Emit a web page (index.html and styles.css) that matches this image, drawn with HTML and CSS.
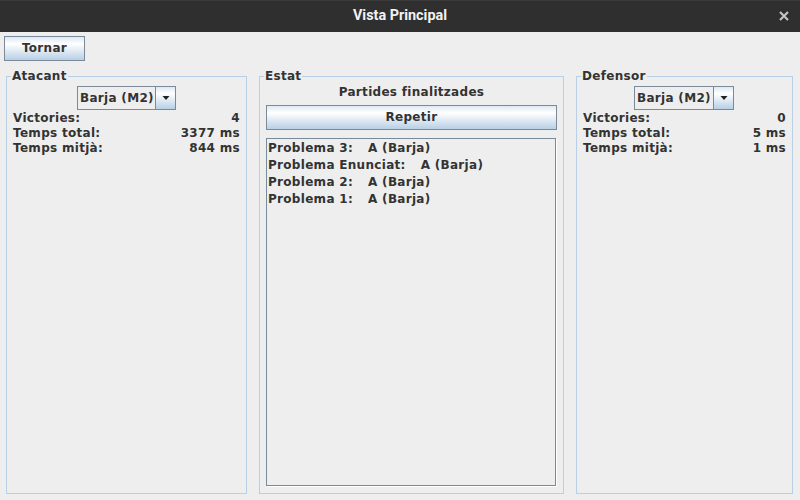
FILE: index.html
```html
<!DOCTYPE html>
<html lang="ca">
<head>
<meta charset="utf-8">
<title>Vista Principal</title>
<link rel="stylesheet" href="styles.css">
</head>
<body>
<div class="window">
  <header class="titlebar">
    <span></span>
    <span class="title">Vista Principal</span>
    <span class="close-wrap">
      <svg class="close" width="10" height="10" viewBox="0 0 10 10"><path d="M1 1 L9 9 M9 1 L1 9" stroke="#c4c4c4" stroke-width="2.2" fill="none"/></svg>
    </span>
  </header>
  <div class="toolbar">
    <button class="btn tornar">Tornar</button>
  </div>
  <main class="panels">
    <fieldset class="panel atacant">
      <legend>Atacant</legend>
      <div class="combo">
        <span class="combo-text">Barja (M2)</span>
        <span class="combo-btn"><svg width="8" height="5" viewBox="0 0 8 5"><path d="M0.5 0 L7.5 0 L4 4 Z" fill="#222"/></svg></span>
      </div>
      <div class="stats">
        <div class="row"><span>Victories:</span><span>4</span></div>
        <div class="row"><span>Temps total:</span><span>3377 ms</span></div>
        <div class="row"><span>Temps mitjà:</span><span>844 ms</span></div>
      </div>
    </fieldset>
    <fieldset class="panel estat">
      <legend>Estat</legend>
      <div class="estat-title">Partides finalitzades</div>
      <button class="btn repetir">Repetir</button>
      <div class="list">
        <div class="item"><span>Problema 3:</span><span class="res">A (Barja)</span></div>
        <div class="item"><span>Problema Enunciat:</span><span class="res">A (Barja)</span></div>
        <div class="item"><span>Problema 2:</span><span class="res">A (Barja)</span></div>
        <div class="item"><span>Problema 1:</span><span class="res">A (Barja)</span></div>
      </div>
    </fieldset>
    <fieldset class="panel defensor">
      <legend>Defensor</legend>
      <div class="combo">
        <span class="combo-text">Barja (M2)</span>
        <span class="combo-btn"><svg width="8" height="5" viewBox="0 0 8 5"><path d="M0.5 0 L7.5 0 L4 4 Z" fill="#222"/></svg></span>
      </div>
      <div class="stats">
        <div class="row"><span>Victories:</span><span>0</span></div>
        <div class="row"><span>Temps total:</span><span>5 ms</span></div>
        <div class="row"><span>Temps mitjà:</span><span>1 ms</span></div>
      </div>
    </fieldset>
  </main>
</div>
</body>
</html>
```

FILE: styles.css
```css
* { box-sizing: border-box; }
html, body { margin: 0; padding: 0; }
body {
  width: 800px;
  height: 500px;
  overflow: hidden;
  background: #eeeeee;
  font-family: "DejaVu Sans", "Liberation Sans", sans-serif;
  font-weight: bold;
  font-size: 12px;
  line-height: 15px;
  letter-spacing: 0.3px;
  color: #333333;
}
.window {
  display: flex;
  flex-direction: column;
  height: 500px;
}
.titlebar {
  height: 32px;
  flex: none;
  background: #2f2f2f;
  border-top: 1px solid #3b3b3b;
  display: grid;
  grid-template-columns: 1fr auto 1fr;
  align-items: center;
  letter-spacing: 0;
}
.title {
  font-family: Roboto, "Liberation Sans", sans-serif;
  font-weight: bold;
  font-size: 14.4px;
  color: #f2f2f2;
  line-height: 16px;
  padding-bottom: 1px;
}
.close-wrap {
  display: flex;
  justify-content: flex-end;
  padding-right: 11px;
  padding-bottom: 1px;
}
.close { display: block; }
.toolbar {
  flex: none;
  padding: 4px 0 0 4px;
  height: 29px;
}
.btn {
  font: inherit;
  letter-spacing: 0.3px;
  color: #333333;
  border: 1px solid #7a8a99;
  border-radius: 0;
  background: linear-gradient(to bottom, #dde8f3 0%, #ffffff 30%, #b8cfe5 100%);
  padding: 0;
  margin: 0;
  height: 25px;
  line-height: 15px;
  display: block;
}
.tornar { width: 81px; }
.panels {
  flex: 1;
  display: flex;
  gap: 12px;
  padding: 8px 7px 6px 6px;
  min-height: 0;
}
.panel {
  margin: 0;
  padding: 0 6px 6px;
  border: 1px solid #b8cfe5;
  min-width: 0;
  display: flex;
  flex-direction: column;
}
.panel legend {
  padding: 0 1px;
  margin-left: -2px;
  line-height: 15px;
  color: #333333;
}
.atacant { width: 241px; flex: none; }
.estat { width: 305px; flex: none; }
.defensor { width: 217px; flex: none; }
.combo {
  align-self: center;
  margin-top: 2px;
  width: 99px;
  height: 24px;
  border: 1px solid #7a8a99;
  display: flex;
  background: #eeeeee;
}
.defensor .combo { width: 100px; margin-left: -1px; }
.combo-text {
  flex: 1;
  padding-left: 2px;
  line-height: 22px;
  white-space: nowrap;
}
.combo-btn {
  width: 20px;
  flex: none;
  border-left: 1px solid #7a8a99;
  background: linear-gradient(to bottom, #dde8f3 0%, #ffffff 30%, #b8cfe5 100%);
  display: flex;
  align-items: center;
  justify-content: center;
}
.combo-btn svg { display: block; }
.stats { margin-top: 1px; }
.row {
  display: flex;
  justify-content: space-between;
  line-height: 15px;
}
.estat-title {
  text-align: center;
  margin-top: 1px;
}
.repetir {
  width: 100%;
  margin-top: 5px;
}
.list {
  flex: 1;
  margin-top: 8px;
  margin-right: 1px;
  margin-bottom: 1px;
  border: 1px solid #7a8a99;
  box-shadow: 1px 1px 0 #ffffff;
  padding: 1px 1px;
}
.item {
  line-height: 17px;
  white-space: nowrap;
}
.res { margin-left: 15px; }
```
